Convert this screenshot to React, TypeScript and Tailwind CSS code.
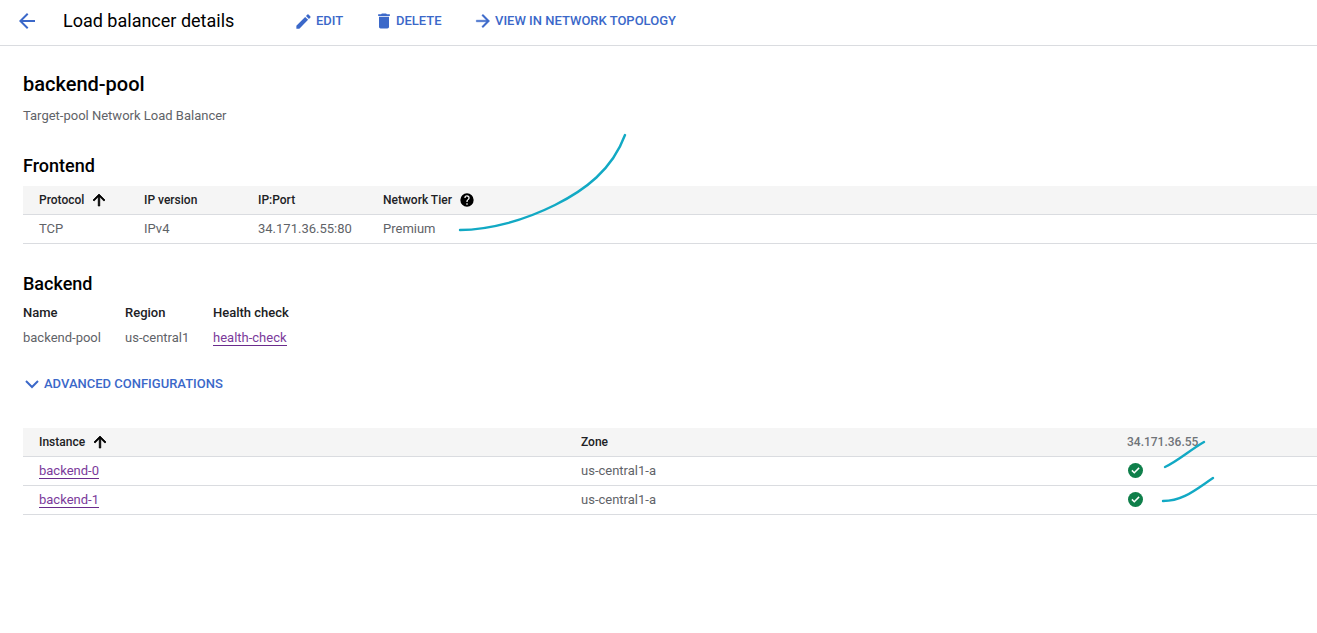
import React from "react";

const SortUp = () => (
  <svg viewBox="0 0 24 24" className="w-[18px] h-[18px] text-black" fill="currentColor" stroke="currentColor" strokeWidth="1"><path d="M4 12l1.41 1.41L11 7.83V20h2V7.83l5.58 5.59L20 12l-8-8z" /></svg>
);
const Check = () => (
  <svg viewBox="0 0 24 24" className="w-[15px] h-[15px]"><circle cx="12" cy="12" r="12" fill="#0f7f4a" /><path d="M10 17.2l-4.6-4.6 1.7-1.7 2.9 2.9 6.9-6.9 1.7 1.7z" fill="#fff" /></svg>
);
const th = "text-xs font-medium text-[#202124]";
const th2 = "text-[13px] leading-4 font-medium text-[#202124]";
const td = "text-[13px] text-[#5f6368]";
const btn = "flex items-center text-[13px] font-medium text-[#3b68c9]";
const link = "text-[13px] leading-[15px] text-[#7b3a9b] border-b border-[#6a2c8c]";
const arrowPath = "M12 4l-1.41 1.41L16.17 11H4v2h12.17l-5.58 5.59L12 20l8-8z";

export default function App() {
  return (
    <div className="relative h-[633px] w-[1317px] overflow-hidden bg-white" style={{ fontFamily: "Roboto, sans-serif" }}>
      <header className="flex h-[46px] items-center border-b border-[#dadce0] pb-[3px]">
        <svg viewBox="0 0 24 24" className="ml-[15px] w-6 h-6 rotate-180 text-[#3b68c9]" fill="currentColor"><path d={arrowPath} /></svg>
        <h1 className="ml-6 w-[232px] text-lg text-black">Load balancer details</h1>
        <div className={`${btn} w-[79px]`}>
          <svg viewBox="0 0 24 24" className="w-[19px] h-[19px] ml-[-1px] mr-[3px]" fill="currentColor"><path d="M3 17.25V21h3.75L17.81 9.94l-3.75-3.75L3 17.25zM20.71 7.04a1 1 0 000-1.41l-2.34-2.34a1 1 0 00-1.41 0l-1.83 1.83 3.75 3.75 1.83-1.83z" /></svg>
          EDIT
        </div>
        <div className={`${btn} w-[99px]`}>
          <svg viewBox="0 0 24 24" className="w-5 h-5 mr-[2px]" fill="currentColor"><path d="M6 19c0 1.1.9 2 2 2h8c1.1 0 2-.9 2-2V7H6v12zM19 4h-3.5l-1-1h-5l-1 1H5v2h14V4z" /></svg>
          DELETE
        </div>
        <div className={btn}>
          <svg viewBox="0 0 24 24" className="w-5 h-5 mr-[2px]" fill="currentColor" stroke="currentColor" strokeWidth="0.5"><path d={arrowPath} /></svg>
          VIEW IN NETWORK TOPOLOGY
        </div>
      </header>

      <main className="pl-[23px]">
        <h2 className="mt-[26px] text-xl leading-6 font-medium text-black">backend-pool</h2>
        <p className="mt-[11px] text-[13px] leading-[17px] text-[#5f6368]">Target-pool Network Load Balancer</p>

        <h3 className="mt-[31px] text-lg leading-[22px] font-medium text-black">Frontend</h3>
        <div className="mt-[9px] flex h-[29px] items-center border-b border-[#dadce0] bg-[#f5f5f5] pl-4">
          <div className={`${th} flex w-[105px] items-center gap-[6px]`}>Protocol <SortUp /></div>
          <div className={`${th} w-[114px]`}>IP version</div>
          <div className={`${th} w-[125px]`}>IP:Port</div>
          <div className={`${th} flex items-center gap-[7px]`}>
            Network Tier
            <svg viewBox="0 0 24 24" className="w-4 h-4 text-black" fill="currentColor"><path d="M12 2a10 10 0 100 20 10 10 0 000-20zm1 17h-2v-2h2v2zm2.07-7.75l-.9.92C13.45 12.9 13 13.5 13 15h-2v-.5c0-1.1.45-2.1 1.17-2.83l1.24-1.26A2 2 0 1010 9H8a4 4 0 118 0c0 .88-.36 1.68-.93 2.25z" /></svg>
          </div>
        </div>
        <div className="flex h-[29px] items-center border-b border-[#dadce0] pl-4">
          <div className={`${td} w-[105px]`}>TCP</div>
          <div className={`${td} w-[114px]`}>IPv4</div>
          <div className={`${td} w-[125px]`}>34.171.36.55:80</div>
          <div className={td}>Premium</div>
        </div>

        <h3 className="mt-[29px] text-lg leading-[22px] font-medium text-black">Backend</h3>
        <div className="mt-[10px] flex">
          <div className="w-[102px]">
            <div className={th2}>Name</div>
            <div className={`${td} mt-[9px] leading-4`}>backend-pool</div>
          </div>
          <div className="w-[88px]">
            <div className={th2}>Region</div>
            <div className={`${td} mt-[9px] leading-4`}>us-central1</div>
          </div>
          <div>
            <div className={th2}>Health check</div>
            <div className="mt-[9px] flex"><span className={link}>health-check</span></div>
          </div>
        </div>

        <div className={`${btn} mt-[28px] h-5`}>
          <svg viewBox="0 0 24 24" className="w-[18px] h-[18px] mr-[3px]" fill="none" stroke="currentColor" strokeWidth="2.6"><path d="M4 8l8 8 8-8" /></svg>
          ADVANCED CONFIGURATIONS
        </div>

        <div className="mt-[34px] flex h-[29px] items-center border-b border-[#dadce0] bg-[#f5f5f5] pl-4">
          <div className={`${th} flex w-[542px] items-center gap-[6px]`}>Instance <SortUp /></div>
          <div className={`${th} w-[546px]`}>Zone</div>
          <div className="text-xs font-medium text-[#6f7378]">34.171.36.55</div>
        </div>
        {["backend-0", "backend-1"].map((n) => (
          <div key={n} className="flex h-[29px] items-center border-b border-[#dadce0] pl-4">
            <div className="w-[542px] flex"><span className={link}>{n}</span></div>
            <div className={`${td} w-[546px]`}>us-central1-a</div>
            <div className="ml-[1px] mb-[2px] flex"><Check /></div>
          </div>
        ))}
      </main>

      <svg className="absolute inset-0 pointer-events-none" width="1317" height="633" fill="none" stroke="#12a9c4" strokeWidth="2.4" strokeLinecap="round">
        <path d="M625 135C612 170 585 190 555 205C525 220 490 230 460 230" />
        <path d="M1165 467C1178 461 1190 450 1204 442" />
        <path d="M1163 501C1183 501 1195 490 1213 478" />
      </svg>
    </div>
  );
}
